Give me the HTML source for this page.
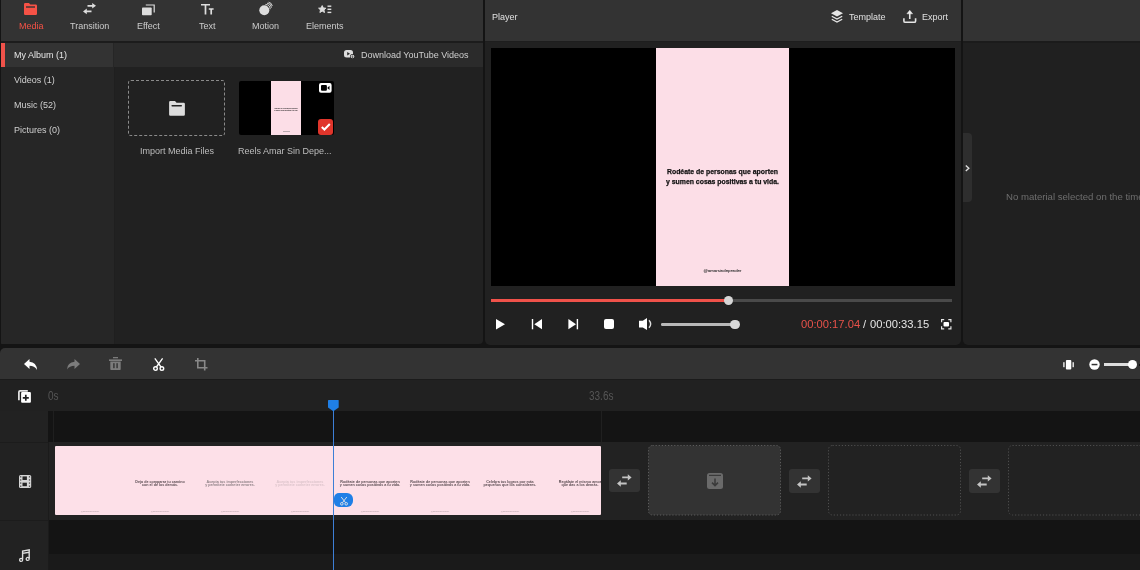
<!DOCTYPE html>
<html><head><meta charset="utf-8">
<style>
*{box-sizing:border-box;margin:0;padding:0}
html,body{width:1140px;height:570px;overflow:hidden;background:#141414;font-family:"Liberation Sans",sans-serif;}
.a{position:absolute}
.t{position:absolute;white-space:nowrap;line-height:1;will-change:transform}
svg{position:absolute;overflow:visible}
.t9{}
</style></head><body>

<!-- ============ MEDIA PANEL ============ -->
<div class="a" style="left:1px;top:0;width:482px;height:344px;background:#212121;border-radius:0 0 4px 1px;overflow:hidden">
  <div class="a" style="left:0;top:0;width:482px;height:41px;background:#333"></div>
  <div class="a" style="left:0;top:41px;width:482px;height:2px;background:#1c1c1c"></div>
  <div class="a" style="left:0;top:43px;width:113px;height:301px;background:#262626"></div>
  <div class="a" style="left:113px;top:67px;width:1px;height:277px;background:#1f1f1f"></div>
    <div class="a" style="left:0;top:43px;width:112px;height:24px;background:#333"></div>
  <div class="a" style="left:0;top:43px;width:4px;height:24px;background:#f0524a"></div>
  <div class="a" style="left:113px;top:43px;width:369px;height:24px;background:#2b2b2b"></div>
</div>

<!-- top nav -->
<svg style="left:24px;top:3px" width="13" height="12" viewBox="0 0 13 12"><path d="M0 1.2Q0 0 1.2 0H5L6.3 1.5H11.8Q13 1.5 13 2.7V10.8Q13 12 11.8 12H1.2Q0 12 0 10.8Z" fill="#f65246"/><rect x="2" y="3.3" width="9" height="1.4" fill="#333"/></svg>
<div class="t t9" style="left:19px;top:22px;font-size:9px;color:#f65246">Media</div>

<svg style="left:83px;top:3px" width="13" height="11" viewBox="0 0 13 11"><path d="M4.5 2.8H10.5M8.5 8.4H2.5" stroke="#ddd" stroke-width="1.7" fill="none"/><path d="M9.2 0L13 2.8L9.2 5.6ZM3.8 5.6L0 8.4L3.8 11.2Z" fill="#ddd"/></svg>
<div class="t t9" style="left:70px;top:22px;font-size:9px;color:#ccc">Transition</div>

<svg style="left:142px;top:3.5px" width="13" height="11" viewBox="0 0 13 11"><rect x="0" y="3.5" width="9.7" height="7.7" rx="0.8" fill="#ddd"/><path d="M3.8 1H12.2V8.5" stroke="#ddd" stroke-width="1.2" fill="none"/></svg>
<div class="t t9" style="left:137px;top:22px;font-size:9px;color:#ccc">Effect</div>

<svg style="left:201px;top:3.5px" width="13" height="11" viewBox="0 0 13 11"><path d="M0 0.8H9M7.8 5.1H12.6" stroke="#ddd" stroke-width="1.5" fill="none"/><path d="M4.5 0.8V10.5M10.2 5V10.5" stroke="#ddd" stroke-width="1.7" fill="none"/></svg>
<div class="t t9" style="left:199px;top:22px;font-size:9px;color:#ccc">Text</div>

<svg style="left:259px;top:2px" width="14" height="14" viewBox="0 0 14 14"><circle cx="5.3" cy="8.3" r="5" fill="#ddd"/><path d="M6.4 2.4A5 5 0 0 1 11.2 7.2M8 1.1A5 5 0 0 1 12.5 5.6M9.5 0.2A4.6 4.6 0 0 1 13.3 4" stroke="#ddd" stroke-width="0.95" fill="none"/></svg>
<div class="t t9" style="left:252px;top:22px;font-size:9px;color:#ccc">Motion</div>

<svg style="left:318px;top:5px" width="14" height="9" viewBox="0 0 14 9"><path d="M4.2 0.6L5.3 3L7.8 3.2L5.9 4.9L6.5 7.5L4.2 6.1L1.9 7.5L2.5 4.9L0.6 3.2L3.1 3Z" fill="#ddd" stroke="#ddd" stroke-width="1" stroke-linejoin="round"/><rect x="9.5" y="0.5" width="3.8" height="1.4" fill="#ddd"/><rect x="9.5" y="3.6" width="3.8" height="1.4" fill="#ddd"/><rect x="9.5" y="6.7" width="3.8" height="1.4" fill="#ddd"/></svg>
<div class="t t9" style="left:305.5px;top:22px;font-size:9px;color:#ccc">Elements</div>

<!-- sidebar -->
<div class="t t9" style="left:13.5px;top:51px;font-size:9px;color:#e6e6e6">My Album (1)</div>
<div class="t t9" style="left:13.5px;top:76px;font-size:9px;color:#cfcfcf">Videos (1)</div>
<div class="t t9" style="left:13.5px;top:101px;font-size:9px;color:#cfcfcf">Music (52)</div>
<div class="t t9" style="left:13.5px;top:126px;font-size:9px;color:#cfcfcf">Pictures (0)</div>

<!-- download youtube -->
<svg style="left:344px;top:50px" width="11" height="9" viewBox="0 0 11 9"><rect x="0" y="0" width="9" height="7.5" rx="2.5" fill="#ddd"/><path d="M3.2 2L6 3.7L3.2 5.4Z" fill="#2b2b2b"/><circle cx="8.5" cy="6.5" r="2.5" fill="#2b2b2b"/><circle cx="8.5" cy="6.5" r="1.8" fill="#ddd"/><path d="M8.5 5.4V7.5M7.6 6.7L8.5 7.6L9.4 6.7" stroke="#2b2b2b" stroke-width="0.6" fill="none"/></svg>
<div class="t t9" style="left:360.5px;top:51px;font-size:9px;color:#cfcfcf">Download YouTube Videos</div>

<!-- import box -->
<div class="a" style="left:128px;top:80px;width:97px;height:56px;border:1px dashed #8a8a8a;border-radius:3px"></div>
<svg style="left:169px;top:100.6px" width="16" height="14.8" viewBox="0 0 16 15"><path d="M0 1.2Q0 0 1.2 0H6L7.5 1.8H14.8Q16 1.8 16 3V13.8Q16 15 14.8 15H1.2Q0 15 0 13.8Z" fill="#ddd"/><rect x="2.3" y="4.1" width="10.8" height="1.6" rx="0.8" fill="#242424"/></svg>
<div class="t t9" style="left:139.5px;top:147px;font-size:9px;color:#bdbdbd">Import Media Files</div>

<!-- media thumb -->
<div class="a" style="left:238.5px;top:81px;width:95.5px;height:53.5px;background:#000;border-radius:2px;overflow:hidden">
  <div class="a" style="left:32.5px;top:0;width:30px;height:53.5px;background:#fcdee7">
    <div class="t" style="left:-84.75px;top:26.5px;width:200px;text-align:center;font-size:8px;font-weight:bold;color:#222;line-height:10.3px;filter:blur(0.2px);transform:scale(0.18);transform-origin:50% 0">Rodéate de personas que aporten<br>y sumen cosas positivas a tu vida.</div>
    <div class="a" style="left:12px;top:49.5px;width:7px;height:0.8px;background:#b9a9ae"></div>
  </div>
</div>
<svg style="left:319.2px;top:83.2px" width="12.6" height="9.8" viewBox="0 0 12.6 9.8"><rect x="0" y="0" width="12.6" height="9.8" rx="2" fill="#fff"/><rect x="2" y="2" width="5.9" height="5.8" rx="1" fill="#000"/><path d="M8.2 4.9L10.5 2.8V7Z" fill="#000"/></svg>
<div class="a" style="left:317.8px;top:119px;width:15.5px;height:15.5px;background:#e0352b;border-radius:3px"></div>
<svg style="left:317.8px;top:119px" width="15.5" height="15.5" viewBox="0 0 15.5 15.5"><path d="M3.8 8L6.4 10.5L11.8 5" stroke="#fff" stroke-width="2" fill="none"/></svg>
<div class="t t9" style="left:238px;top:147px;font-size:9px;color:#bdbdbd">Reels Amar Sin Depe...</div>

<!-- ============ PLAYER PANEL ============ -->
<div class="a" style="left:485px;top:0;width:476px;height:344.5px;background:#212121;border-radius:0 0 5px 5px;overflow:hidden">
  <div class="a" style="left:0;top:0;width:476px;height:41px;background:#333"></div>
  <div class="a" style="left:0;top:41px;width:476px;height:1px;background:#1e1e1e"></div>
  <div class="a" style="left:6px;top:48px;width:464px;height:238px;background:#000"></div>
  <div class="a" style="left:170.5px;top:48px;width:133.5px;height:238px;background:#fcdee7"></div>
</div>
<div class="t t9" style="left:491.5px;top:13px;font-size:9px;color:#e0e0e0">Player</div>

<svg style="left:830.5px;top:9.5px" width="12" height="13.5" viewBox="0 0 12 13.5"><path d="M6 0L12 3.2L6 6.4L0 3.2Z" fill="#e6e6e6"/><path d="M0.8 6.2L6 9L11.2 6.2M0.8 9.3L6 12.1L11.2 9.3" stroke="#e6e6e6" stroke-width="1.3" fill="none"/></svg>
<div class="t t9" style="left:849px;top:13px;font-size:9px;color:#e0e0e0">Template</div>
<svg style="left:903px;top:9.5px" width="13.5" height="13.5" viewBox="0 0 13.5 13.5"><path d="M0.9 8.2V10.9Q0.9 12.3 2.3 12.3H11.2Q12.6 12.3 12.6 10.9V8.2M6.75 3V9" stroke="#e6e6e6" stroke-width="1.6" fill="none"/><path d="M3.9 3.8L6.75 0.3L9.6 3.8Z" fill="#eee" stroke="#eee" stroke-width="0.5" stroke-linejoin="round"/></svg>
<div class="t t9" style="left:922px;top:13px;font-size:9px;color:#e0e0e0">Export</div>

<!-- preview text -->
<div class="t" style="left:656px;top:166.5px;width:133px;text-align:center;font-size:6.9px;font-weight:bold;color:#111;line-height:10.3px;-webkit-text-stroke:0.25px #111">Rodéate de personas que aporten<br>y sumen cosas positivas a tu vida.</div>
<div class="t" style="left:656px;top:268.8px;width:133px;text-align:center;font-size:4.3px;color:#333;-webkit-text-stroke:0.1px #333">@amarsindepender</div>

<!-- progress -->
<div class="a" style="left:491px;top:299px;width:461px;height:3px;background:#4a4a4a"></div>
<div class="a" style="left:491px;top:299px;width:237.5px;height:3px;background:#f0524a"></div>
<div class="a" style="left:723.8px;top:295.9px;width:9.2px;height:9.2px;border-radius:50%;background:#d6d6d6"></div>

<!-- controls -->
<svg style="left:496px;top:319px" width="9" height="10.5" viewBox="0 0 9 10.5"><path d="M0 0L9 5.25L0 10.5Z" fill="#fff"/></svg>
<svg style="left:531px;top:319px" width="11" height="10.3" viewBox="0 0 11 10.3"><rect x="0.8" y="0" width="1.4" height="10.3" fill="#fff"/><path d="M11 0V10.3L3.3 5.15Z" fill="#fff"/></svg>
<svg style="left:567.5px;top:319px" width="11" height="10.3" viewBox="0 0 11 10.3"><rect x="8.7" y="0" width="1.4" height="10.3" fill="#fff"/><path d="M0.4 0V10.3L8 5.15Z" fill="#fff"/></svg>
<div class="a" style="left:604.1px;top:318.9px;width:10.3px;height:10.3px;background:#fff;border-radius:2px"></div>
<svg style="left:638.5px;top:317.7px" width="14" height="12.5" viewBox="0 0 14 12.5"><path d="M0 2.8H3.8L8 0V12L3.8 9.4H0Z" fill="#fff"/><path d="M10 2.3Q13.3 6 10 9.8" stroke="#ddd" stroke-width="1.4" fill="none"/></svg>
<div class="a" style="left:661px;top:323.3px;width:73px;height:2.6px;background:#b8b8b8;border-radius:1.3px"></div>
<div class="a" style="left:730px;top:319.8px;width:9.5px;height:9.5px;border-radius:50%;background:#d8d8d8"></div>

<div class="t" style="left:801px;top:319px;font-size:11.2px;color:#e8524a">00:00:17.04</div>
<div class="t" style="left:863px;top:319px;font-size:11.2px;color:#e6e6e6">/</div>
<div class="t" style="left:870px;top:319px;font-size:11.2px;color:#e6e6e6">00:00:33.15</div>
<svg style="left:941px;top:318.5px" width="10.5" height="10.5" viewBox="0 0 10.5 10.5"><path d="M0.6 3.2V0.6H3.2M7.3 0.6H9.9V3.2M9.9 7.3V9.9H7.3M3.2 9.9H0.6V7.3" stroke="#e6e6e6" stroke-width="1.2" fill="none"/><rect x="2.5" y="3" width="5.5" height="4.5" rx="1" fill="#fff"/></svg>

<!-- ============ RIGHT PANEL ============ -->
<div class="a" style="left:963px;top:0;width:177px;height:344.5px;background:#202020;border-radius:0 0 0 5px;overflow:hidden">
  <div class="a" style="left:0;top:0;width:177px;height:41px;background:#333"></div>
  <div class="a" style="left:0;top:41px;width:177px;height:1.5px;background:#1b1b1b"></div>
</div>
<div class="a" style="left:963px;top:133px;width:8.5px;height:69px;background:#2e2e2e;border-radius:0 4px 4px 0"></div>
<svg style="left:964.5px;top:165px" width="5" height="6.5" viewBox="0 0 5 6.5"><path d="M0.8 0.6L3.8 3.25L0.8 5.9" stroke="#ddd" stroke-width="1.4" fill="none"/></svg>
<div class="t t9" style="left:1005.5px;top:192px;font-size:9.6px;color:#6e6e6e">No material selected on the timeline</div>

<!-- ============ TIMELINE ============ -->
<div class="a" style="left:0;top:348px;width:1140px;height:31px;background:#333;border-radius:5px 0 0 0"></div>
<div class="a" style="left:0;top:379px;width:1140px;height:32px;background:#212121"></div>
<div class="a" style="left:0;top:379px;width:1140px;height:1px;background:#1b1b1b"></div>
<!-- track area -->
<div class="a" style="left:0;top:411px;width:48px;height:159px;background:#222"></div>
<div class="a" style="left:0;top:441.5px;width:48px;height:1px;background:#1c1c1c"></div>
<div class="a" style="left:0;top:519.5px;width:48px;height:1px;background:#1c1c1c"></div>
<div class="a" style="left:48px;top:411px;width:1092px;height:30.5px;background:#141414"></div>
<div class="a" style="left:52.5px;top:411px;width:1px;height:30.5px;background:#1f1f1f"></div>
<div class="a" style="left:48px;top:441.5px;width:1092px;height:78.5px;background:#222"></div>
<div class="a" style="left:48px;top:520px;width:1092px;height:34px;background:#141414"></div>
<div class="a" style="left:48px;top:554px;width:1092px;height:16px;background:#1a1a1a"></div>
<div class="a" style="left:600.5px;top:411px;width:1px;height:30.5px;background:#202020"></div>
<div class="a" style="left:48px;top:441.5px;width:1px;height:128.5px;background:#1b1b1b"></div>

<!-- toolbar icons -->
<svg style="left:24px;top:359px" width="13" height="11" viewBox="0 0 13 11"><path d="M5.5 0L0 5L5.5 10V6.8Q10.5 6.8 13 11Q12.5 3.2 5.5 2.8Z" fill="#fff"/></svg>
<svg style="left:66.5px;top:359px" width="13" height="10.5" viewBox="0 0 13 10.5"><path d="M7.5 0L13 5L7.5 10V6.8Q2.5 6.8 0 10.5Q0.5 3.2 7.5 2.8Z" fill="#7c7c7c"/></svg>
<svg style="left:109.3px;top:357.3px" width="13" height="13" viewBox="0 0 13 13"><rect x="4" y="0" width="5" height="1.3" fill="#7c7c7c"/><rect x="0" y="2.4" width="13" height="1.6" fill="#7c7c7c"/><path d="M1.3 4.6H11.7V12.2Q11.7 13 10.9 13H2.1Q1.3 13 1.3 12.2Z" fill="#7c7c7c"/><rect x="4.2" y="6.2" width="1.4" height="5" fill="#333"/><rect x="7.4" y="6.2" width="1.4" height="5" fill="#333"/></svg>
<svg style="left:153px;top:357.5px" width="12" height="13" viewBox="0 0 12 13"><circle cx="2.5" cy="10.6" r="1.8" stroke="#fff" stroke-width="1.4" fill="none"/><circle cx="8.9" cy="10.6" r="1.8" stroke="#fff" stroke-width="1.4" fill="none"/><path d="M3.4 9L9.6 0.3M8 9L1.8 0.3" stroke="#fff" stroke-width="1.3" fill="none"/></svg>
<svg style="left:195px;top:358px" width="12.5" height="12.5" viewBox="0 0 12.5 12.5"><path d="M2.8 0V9.7H12.5M0 2.8H9.7V12.5" stroke="#888" stroke-width="1.6" fill="none"/></svg>

<svg style="left:1063px;top:359.8px" width="11" height="9.5" viewBox="0 0 11 9.5"><rect x="2.9" y="0" width="5.4" height="9.5" rx="1" fill="#fff"/><rect x="0.2" y="2.2" width="1.4" height="5" fill="#eee"/><rect x="9.5" y="2.2" width="1.4" height="5" fill="#eee"/></svg>
<svg style="left:1088.5px;top:359px" width="11" height="11" viewBox="0 0 11 11"><circle cx="5.5" cy="5.5" r="5.2" fill="#fff"/><rect x="2.6" y="4.8" width="5.8" height="1.5" fill="#333"/></svg>
<div class="a" style="left:1103.5px;top:363.3px;width:28px;height:2.6px;background:#ddd"></div>
<div class="a" style="left:1127.9px;top:359.6px;width:9.2px;height:9.2px;border-radius:50%;background:#fff"></div>
<div class="a" style="left:1138.5px;top:363.5px;width:1.5px;height:2px;background:#111"></div>

<!-- ruler -->
<svg style="left:17.9px;top:389.7px" width="13" height="13" viewBox="0 0 13 13"><path d="M0.9 10.2V2.1Q0.9 0.9 2.1 0.9H9.8" stroke="#e6e6e6" stroke-width="1.7" fill="none"/><rect x="3.1" y="2.1" width="9.8" height="10.6" rx="1" fill="#fff"/><path d="M7.8 4.8V10.8M4.8 7.8H10.8" stroke="#222" stroke-width="1.7"/></svg>
<div class="t" style="left:48.2px;top:390.2px;font-size:10px;color:#555;transform:scaleY(1.22);transform-origin:0 0">0s</div>
<div class="t" style="left:588.5px;top:390.2px;font-size:10px;color:#555;transform:scaleY(1.22);transform-origin:0 0">33.6s</div>

<!-- track icons -->
<svg style="left:18.8px;top:474.8px" width="12.2" height="13" viewBox="0 0 12.2 13"><rect x="0" y="0" width="12.2" height="13" rx="1.6" fill="#d6d6d6"/><rect x="3.5" y="1.4" width="4.4" height="3.6" fill="#262626"/><rect x="3.5" y="7.7" width="4.4" height="3.5" fill="#262626"/><rect x="1.1" y="1.3" width="1.2" height="1.1" fill="#2a2a2a"/><rect x="1.1" y="4.4" width="1.2" height="1.1" fill="#2a2a2a"/><rect x="1.1" y="7.5" width="1.2" height="1.1" fill="#2a2a2a"/><rect x="1.1" y="10.6" width="1.2" height="1.1" fill="#2a2a2a"/><rect x="9.9" y="1.3" width="1.2" height="1.1" fill="#2a2a2a"/><rect x="9.9" y="4.4" width="1.2" height="1.1" fill="#2a2a2a"/><rect x="9.9" y="7.5" width="1.2" height="1.1" fill="#2a2a2a"/><rect x="9.9" y="10.6" width="1.2" height="1.1" fill="#2a2a2a"/></svg>
<svg style="left:19px;top:549px" width="11" height="13" viewBox="0 0 11 13"><path d="M3.6 10.5V2L10.2 0.8V9.6M3.6 4.4L10.2 3.2" stroke="#ddd" stroke-width="1.4" fill="none"/><circle cx="2.1" cy="10.9" r="1.5" stroke="#ddd" stroke-width="1.3" fill="none"/><circle cx="8.7" cy="9.9" r="1.5" stroke="#ddd" stroke-width="1.3" fill="none"/></svg>

<!-- clip -->
<div class="a" style="left:54.5px;top:446px;width:546px;height:69px;background:#fde0e8;overflow:hidden;border-radius:1px" id="clip"><div class="a" style="left:0;top:0;width:546.5px;height:69px;will-change:transform"><div class="t" style="left:-65.5px;top:64.2px;width:200px;text-align:center;font-size:8px;color:#a8969c;line-height:8px;transform:scale(0.26);transform-origin:50% 0;will-change:auto">@amarsindepender</div><div class="t" style="left:4.5px;top:33.5px;width:200px;text-align:center;font-size:8px;font-weight:bold;color:#5a4c52;line-height:7px;transform:scale(0.46);transform-origin:50% 0;will-change:auto">Deja de comparar tu camino<br>con el de los demás.</div><div class="t" style="left:4.5px;top:64.2px;width:200px;text-align:center;font-size:8px;color:#a8969c;line-height:8px;transform:scale(0.26);transform-origin:50% 0;will-change:auto">@amarsindepender</div><div class="t" style="left:74.5px;top:33.5px;width:200px;text-align:center;font-size:8px;font-weight:bold;color:#8f8287;line-height:7px;transform:scale(0.46);transform-origin:50% 0;will-change:auto">Acepta tus imperfecciones<br>y permítete cometer errores.</div><div class="t" style="left:74.5px;top:64.2px;width:200px;text-align:center;font-size:8px;color:#a8969c;line-height:8px;transform:scale(0.26);transform-origin:50% 0;will-change:auto">@amarsindepender</div><div class="t" style="left:144.5px;top:33.5px;width:200px;text-align:center;font-size:8px;font-weight:bold;color:#dcc4cb;line-height:7px;transform:scale(0.46);transform-origin:50% 0;will-change:auto">Acepta tus imperfecciones<br>y permítete cometer errores.</div><div class="t" style="left:144.5px;top:64.2px;width:200px;text-align:center;font-size:8px;color:#a8969c;line-height:8px;transform:scale(0.26);transform-origin:50% 0;will-change:auto">@amarsindepender</div><div class="t" style="left:214.5px;top:33.5px;width:200px;text-align:center;font-size:8px;font-weight:bold;color:#5a4c52;line-height:7px;transform:scale(0.46);transform-origin:50% 0;will-change:auto">Rodéate de personas que aporten<br>y sumen cosas positivas a tu vida.</div><div class="t" style="left:214.5px;top:64.2px;width:200px;text-align:center;font-size:8px;color:#a8969c;line-height:8px;transform:scale(0.26);transform-origin:50% 0;will-change:auto">@amarsindepender</div><div class="t" style="left:284.5px;top:33.5px;width:200px;text-align:center;font-size:8px;font-weight:bold;color:#5a4c52;line-height:7px;transform:scale(0.46);transform-origin:50% 0;will-change:auto">Rodéate de personas que aporten<br>y sumen cosas positivas a tu vida.</div><div class="t" style="left:284.5px;top:64.2px;width:200px;text-align:center;font-size:8px;color:#a8969c;line-height:8px;transform:scale(0.26);transform-origin:50% 0;will-change:auto">@amarsindepender</div><div class="t" style="left:354.5px;top:33.5px;width:200px;text-align:center;font-size:8px;font-weight:bold;color:#5a4c52;line-height:7px;transform:scale(0.46);transform-origin:50% 0;will-change:auto">Celebra tus logros por más<br>pequeños que los consideres.</div><div class="t" style="left:354.5px;top:64.2px;width:200px;text-align:center;font-size:8px;color:#a8969c;line-height:8px;transform:scale(0.26);transform-origin:50% 0;will-change:auto">@amarsindepender</div><div class="t" style="left:424.5px;top:33.5px;width:200px;text-align:center;font-size:8px;font-weight:bold;color:#5a4c52;line-height:7px;transform:scale(0.46);transform-origin:50% 0;will-change:auto">Regálate el mismo amor<br>que das a los demás.</div><div class="t" style="left:424.5px;top:64.2px;width:200px;text-align:center;font-size:8px;color:#a8969c;line-height:8px;transform:scale(0.26);transform-origin:50% 0;will-change:auto">@amarsindepender</div></div></div>

<!-- transitions & placeholders -->
<div class="a" style="left:609px;top:468.5px;width:31px;height:23.5px;background:#333;border-radius:3px"></div>
<svg style="left:648px;top:445px" width="133" height="70.5"><rect x="0.5" y="0.5" width="132" height="69.5" rx="4" fill="#333" stroke="#5c5c5c" stroke-width="1" stroke-dasharray="1.2 1.9"/></svg>
<div class="a" style="left:788.5px;top:469px;width:31px;height:23.5px;background:#333;border-radius:3px"></div>
<svg style="left:828px;top:445px" width="133" height="70.5"><rect x="0.5" y="0.5" width="132" height="69.5" rx="4" fill="none" stroke="#4e4e4e" stroke-width="1" stroke-dasharray="1.2 1.9"/></svg>
<div class="a" style="left:969px;top:469px;width:31px;height:23.5px;background:#333;border-radius:3px"></div>
<svg style="left:1008px;top:445px" width="160" height="70.5"><rect x="0.5" y="0.5" width="159" height="69.5" rx="4" fill="none" stroke="#4e4e4e" stroke-width="1" stroke-dasharray="1.2 1.9"/></svg>

<svg style="left:617px;top:474px" width="15" height="13" viewBox="0 0 15 13"><path d="M5.2 3.4H12M9.7 9.5H2.8" stroke="#c4c4c4" stroke-width="1.8" fill="none"/><path d="M10.8 0.2L14.6 3.4L10.8 6.6ZM3.8 6.3L0 9.5L3.8 12.7Z" fill="#c4c4c4"/></svg>
<svg style="left:796.5px;top:474.5px" width="15" height="13" viewBox="0 0 15 13"><path d="M5.2 3.4H12M9.7 9.5H2.8" stroke="#c4c4c4" stroke-width="1.8" fill="none"/><path d="M10.8 0.2L14.6 3.4L10.8 6.6ZM3.8 6.3L0 9.5L3.8 12.7Z" fill="#c4c4c4"/></svg>
<svg style="left:977px;top:474.5px" width="15" height="13" viewBox="0 0 15 13"><path d="M5.2 3.4H12M9.7 9.5H2.8" stroke="#c4c4c4" stroke-width="1.8" fill="none"/><path d="M10.8 0.2L14.6 3.4L10.8 6.6ZM3.8 6.3L0 9.5L3.8 12.7Z" fill="#c4c4c4"/></svg>

<svg style="left:707px;top:473px" width="16" height="16" viewBox="0 0 16 16"><rect x="0" y="0" width="16" height="16" rx="2.5" fill="#6a6a6a"/><rect x="2" y="1.8" width="12" height="1.2" fill="#3a3a3a"/><path d="M8 5.5V12.5M5 9.6L8 12.6L11 9.6" stroke="#3a3a3a" stroke-width="1.5" fill="none"/></svg>

<!-- playhead -->
<div class="a" style="left:333px;top:405px;width:1px;height:165px;background:#3d7fd6"></div>
<svg style="left:328.2px;top:400px" width="10.7" height="11.2" viewBox="0 0 10.7 11.2"><path d="M0 0.6Q0 0 0.6 0H10.1Q10.7 0 10.7 0.6V7.4L5.35 11.2L0 7.4Z" fill="#1f7fe6"/></svg>
<div class="a" style="left:334px;top:493.3px;width:19px;height:14px;background:#1f7fe6;border-radius:5px 6px 6px 5px"></div>
<svg style="left:339.5px;top:496.5px" width="8" height="8.5" viewBox="0 0 8 8.5"><circle cx="1.8" cy="6.8" r="1.3" stroke="#e6e6e6" stroke-width="0.9" fill="none"/><circle cx="6.2" cy="6.8" r="1.3" stroke="#e6e6e6" stroke-width="0.9" fill="none"/><path d="M2.5 5.6L6.8 0M5.5 5.6L1.2 0" stroke="#e6e6e6" stroke-width="0.9" fill="none"/></svg>

</body></html>
